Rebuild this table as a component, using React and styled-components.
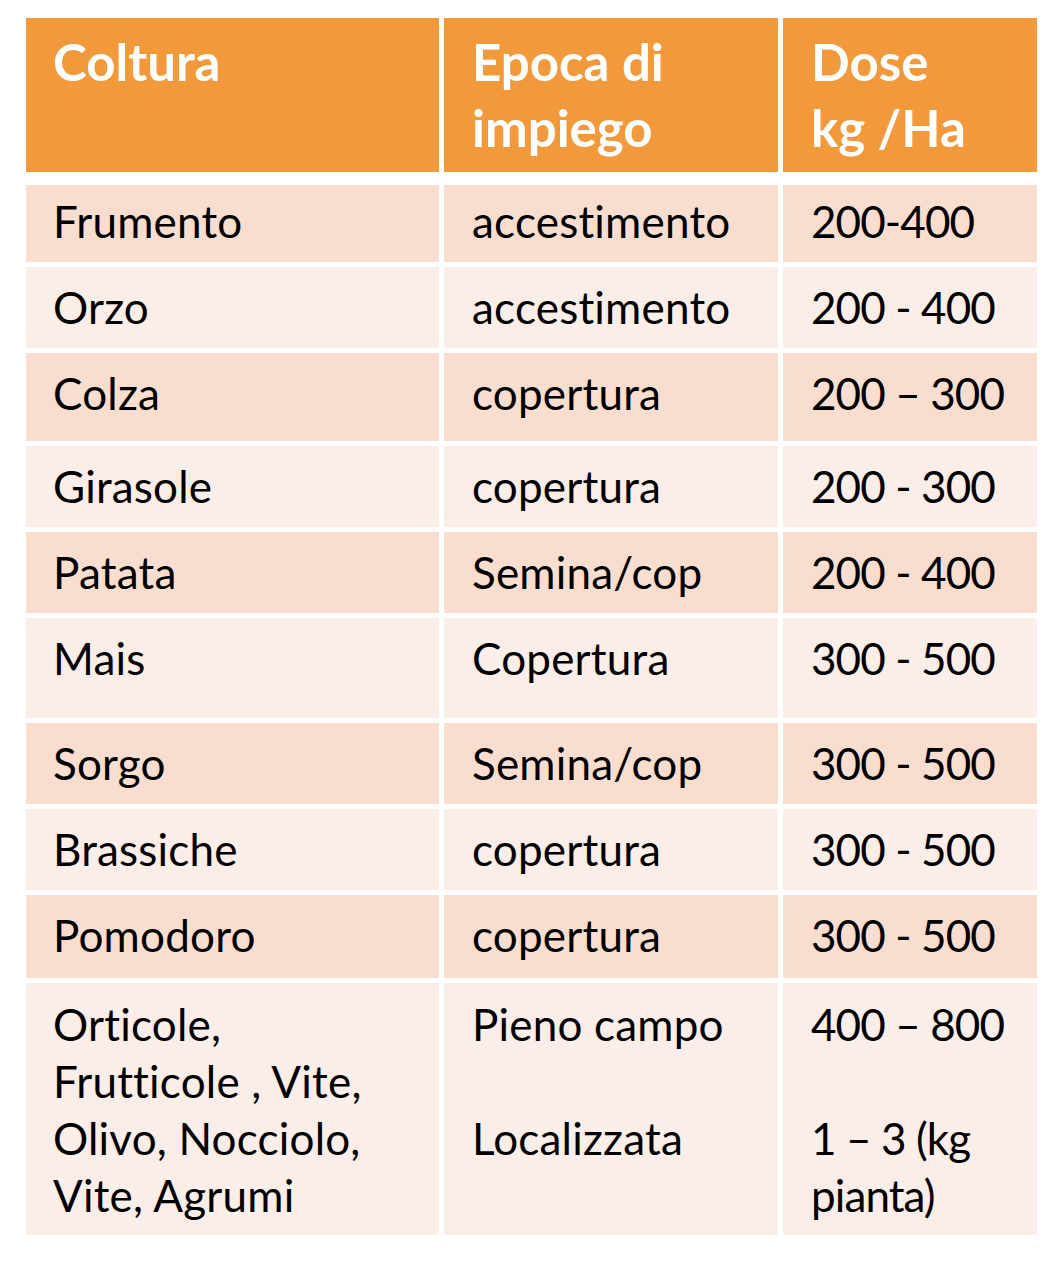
import React from 'react'
import styled, { createGlobalStyle } from 'styled-components'

const GlobalStyle = createGlobalStyle`
  html, body {
    margin: 0;
    padding: 0;
    background: #ffffff;
  }
  body {
    font-family: Lato, "Open Sans", "Liberation Sans", sans-serif;
    font-variant-ligatures: none;
    font-feature-settings: "liga" 0, "clig" 0;
  }
`

const Page = styled.div`
  width: 1060px;
  min-height: 1264px;
  padding: 18px 0 0 26px;
  box-sizing: border-box;
`

const Table = styled.div`
  width: 1011px;
  display: flex;
  flex-direction: column;
  gap: 5px;
`

const Row = styled.div`
  display: grid;
  grid-template-columns: 413px 334px 254px;
  column-gap: 5px;
  height: ${props => props.h}px;
`

const HeadRow = styled(Row)`
  margin-bottom: 8px;
`

const HeadCell = styled.div`
  background: #f2993b;
  color: #ffffff;
  font-weight: 700;
  font-size: 51px;
  line-height: 66px;
  padding: 11px 0 0 ${props => props.indent}px;
  box-sizing: border-box;
`

const Cell = styled.div`
  background: ${props => (props.dark ? '#f9ddcf' : '#fbede8')};
  color: #000000;
  font-size: 44px;
  line-height: 57px;
  letter-spacing: ${props => props.spacing || 0}px;
  padding: ${props => props.top}px 0 0 ${props => props.indent}px;
  box-sizing: border-box;
  white-space: nowrap;
`

const indents = [27, 28, 28]
const spacings = [0.2, 0.2, -0.9]

const rows = [
  { h: 77, top: 8, cells: ['Frumento', 'accestimento', '200-400'] },
  { h: 81, top: 12, cells: ['Orzo', 'accestimento', '200 - 400'] },
  { h: 88, top: 12, cells: ['Colza', 'copertura', '200 \u2013 300'] },
  { h: 81, top: 12, cells: ['Girasole', 'copertura', '200 - 300'] },
  { h: 81, top: 12, cells: ['Patata', 'Semina/cop', '200 - 400'] },
  { h: 100, top: 12, cells: ['Mais', 'Copertura', '300 - 500'] },
  { h: 81, top: 12, cells: ['Sorgo', 'Semina/cop', '300 - 500'] },
  { h: 81, top: 12, cells: ['Brassiche', 'copertura', '300 - 500'] },
  { h: 83, top: 12, cells: ['Pomodoro', 'copertura', '300 - 500'] },
  {
    h: 252,
    top: 13,
    cells: [
      ['Orticole,', 'Frutticole , Vite,', 'Olivo, Nocciolo,', 'Vite, Agrumi'],
      ['Pieno campo', '', 'Localizzata'],
      ['400 \u2013 800', '', '1 \u2013 3 (kg', 'pianta)'],
    ],
  },
]

function Lines({ text }) {
  if (!Array.isArray(text)) return text
  return text.map((line, i) => (
    <React.Fragment key={i}>
      {line}
      {i < text.length - 1 && <br />}
    </React.Fragment>
  ))
}

export default function App() {
  return (
    <Page>
      <GlobalStyle />
      <Table>
        <HeadRow h={154}>
          <HeadCell indent={indents[0]}>Coltura</HeadCell>
          <HeadCell indent={indents[1]}>Epoca di<br />impiego</HeadCell>
          <HeadCell indent={indents[2]}>Dose<br />kg /Ha</HeadCell>
        </HeadRow>
        {rows.map((row, r) => (
          <Row h={row.h} key={r}>
            {row.cells.map((text, c) => (
              <Cell
                key={c}
                dark={r % 2 === 0}
                top={row.top}
                indent={indents[c]}
                spacing={spacings[c]}
              >
                <Lines text={text} />
              </Cell>
            ))}
          </Row>
        ))}
      </Table>
    </Page>
  )
}
